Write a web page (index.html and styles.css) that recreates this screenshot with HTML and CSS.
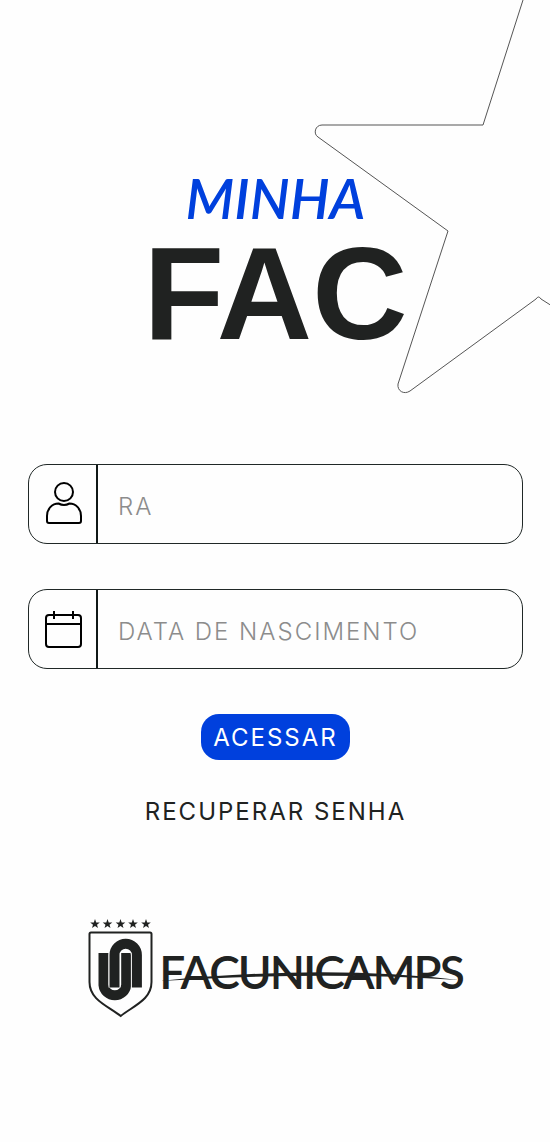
FILE: index.html
```html
<!DOCTYPE html>
<html lang="pt-BR">
<head>
    <meta charset="UTF-8">
    <meta name="viewport" content="width=device-width, initial-scale=1.0">
    <title>Minha FAC</title>
    <link rel="stylesheet" href="styles.css">
</head>
<body>
    <svg class="star" viewBox="0 0 250 400" aria-hidden="true">
        <path d="M223 0 L183 125 H22 C15 125 13 134 18 137 L148 231 L98 384 C97 391 104 395 110 391 L236 299 Q238.500 295 241 299 L252 306"/>
    </svg>

    <main class="login">
        <h1 class="title">
            <span class="title-top">MINHA</span>
            <span class="title-main">FAC</span>
        </h1>

        <form class="form" action="#" method="POST">
            <div class="field">
                <label class="field-icon" for="ra">
                    <svg width="42" height="46" viewBox="-3 1 42 46" role="img" aria-label="RA">
                        <circle cx="19" cy="12" r="9"/>
                        <path d="M13.500 23.500 Q19 26.500 24.500 23.500 C31 23.500 36 29 36 36 V41 Q36 43 34 43 H4 Q2 43 2 41 V36 C2 29 7 23.500 13.500 23.500 Z"/>
                    </svg>
                </label>
                <input type="text" id="ra" name="ra" placeholder="RA" required>
            </div>

            <div class="field">
                <label class="field-icon" for="nascimento">
                    <svg width="42" height="38" viewBox="-3 -1 42 38" role="img" aria-label="Data de nascimento">
                        <rect x="1" y="4" width="35" height="32" rx="3"/>
                        <path d="M1 13 H36 M9 0 V8 M28 0 V8"/>
                    </svg>
                </label>
                <input type="text" id="nascimento" name="nascimento" placeholder="DATA DE NASCIMENTO" required>
            </div>

            <button type="submit">ACESSAR</button>
            <a class="recover" href="#">RECUPERAR SENHA</a>
        </form>
    </main>

    <footer class="brand">
        <svg class="shield" width="68" height="104" viewBox="0 0 68 104" aria-hidden="true">
            <defs>
                <polygon id="s" points="0,-5 1.200,-1.600 4.800,-1.500 2,0.700 3,4 0,2 -3,4 -2,0.700 -4.800,-1.500 -1.200,-1.600"/>
            </defs>
            <use href="#s" x="8" y="8"/>
            <use href="#s" x="20.500" y="8"/>
            <use href="#s" x="33.500" y="8"/>
            <use href="#s" x="46" y="8"/>
            <use href="#s" x="59" y="8"/>
            <path class="line" d="M4 16.500 H63 Q64.500 16.500 64.500 18 V66 C64.500 84 46 90 33.700 100 C21 90 2.500 84 2.500 66 V18 Q2.500 16.500 4 16.500 Z"/>
            <path class="thick" d="M16.500 37 V69 A11.400 11.400 0 0 0 39.200 69 V37"/>
            <path class="gap" d="M27.500 71.500 V39 A11.200 11.200 0 0 1 49.900 39 V71.500"/>
            <path class="thick" d="M27.500 71.500 V39 A11.200 11.200 0 0 1 49.900 39 V71.500"/>
        </svg>
        <div class="brand-name">
            <span>FACUNICAMPS</span>
            <svg class="swoosh" viewBox="0 0 300 14" preserveAspectRatio="none" aria-hidden="true">
                <path d="M1 11 Q165 -6 296 10 Q165 1 1 11 Z"/>
            </svg>
        </div>
    </footer>
</body>
</html>
```
FILE: styles.css
```css
* {
    box-sizing: border-box;
}

body {
    margin: 0;
    min-height: 100vh;
    position: relative;
    overflow-x: hidden;
    background: #fefefe;
    color: #202221;
    font-family: Inter, Arial, sans-serif;
}

/* Star outline behind the title */
.star {
    position: absolute;
    top: 0;
    right: 0;
    width: 250px;
    height: 400px;
    fill: none;
    stroke: #555;
    stroke-width: 1;
}

.login {
    position: relative;
    padding: 162px 27px 0 28px;
}

.title {
    margin: 0;
    display: flex;
    flex-direction: column;
    align-items: center;
}

.title-top {
    color: #0040dd;
    font-family: Lato, sans-serif;
    font-size: 56px;
    font-style: italic;
    font-weight: 600;
    line-height: 72px;
}

.title-main {
    font-family: "Liberation Sans", Arial, sans-serif;
    font-size: 132px;
    font-weight: 700;
    line-height: 120px;
}

.form {
    margin-top: 110px;
    display: flex;
    flex-direction: column;
    align-items: center;
}

.field {
    display: flex;
    width: 100%;
    height: 80px;
    margin-bottom: 45px;
    border: 1px solid #202827;
    border-radius: 19px;
}

.field-icon {
    display: flex;
    align-items: center;
    justify-content: center;
    width: 69px;
    flex-shrink: 0;
    border-right: 2px solid #101817;
}

.field-icon svg {
    fill: none;
    stroke: #000;
    stroke-width: 2;
}

input {
    flex: 1;
    min-width: 0;
    padding: 5px 20px 0;
    border: none;
    border-radius: 0 18px 18px 0;
    background: none;
    color: #202221;
    font-family: inherit;
    font-size: 24px;
    font-weight: 300;
    letter-spacing: 2px;
}

input::placeholder {
    color: #8c8c8c;
    opacity: 1;
}

input:focus {
    outline: 2px solid #0040dd;
}

button {
    height: 46px;
    padding: 0 12px;
    border: none;
    border-radius: 18px;
    background: #0040dd;
    color: #fff;
    font-family: inherit;
    font-size: 24px;
    letter-spacing: 2px;
    cursor: pointer;
}

.recover {
    margin-top: 36px;
    color: #202221;
    font-size: 24px;
    line-height: 32px;
    letter-spacing: 2px;
    text-decoration: none;
}

.brand {
    display: flex;
    justify-content: center;
    padding: 88px 0 80px;
}

.brand-name {
    position: relative;
    margin: 28px 0 0 4px;
    font-family: Lato, sans-serif;
    font-size: 46px;
    font-weight: 600;
    line-height: 56px;
    letter-spacing: -2px;
}

.swoosh {
    position: absolute;
    left: 0;
    top: 26px;
    width: 100%;
    height: 14px;
    fill: #202221;
}

.shield {
    fill: #202221;
}

.shield .line {
    fill: none;
    stroke: #202221;
    stroke-width: 2;
}

.shield .thick,
.shield .gap {
    fill: none;
    stroke: #202221;
    stroke-width: 10;
}

.shield .gap {
    stroke: #fefefe;
    stroke-width: 12;
}
```
